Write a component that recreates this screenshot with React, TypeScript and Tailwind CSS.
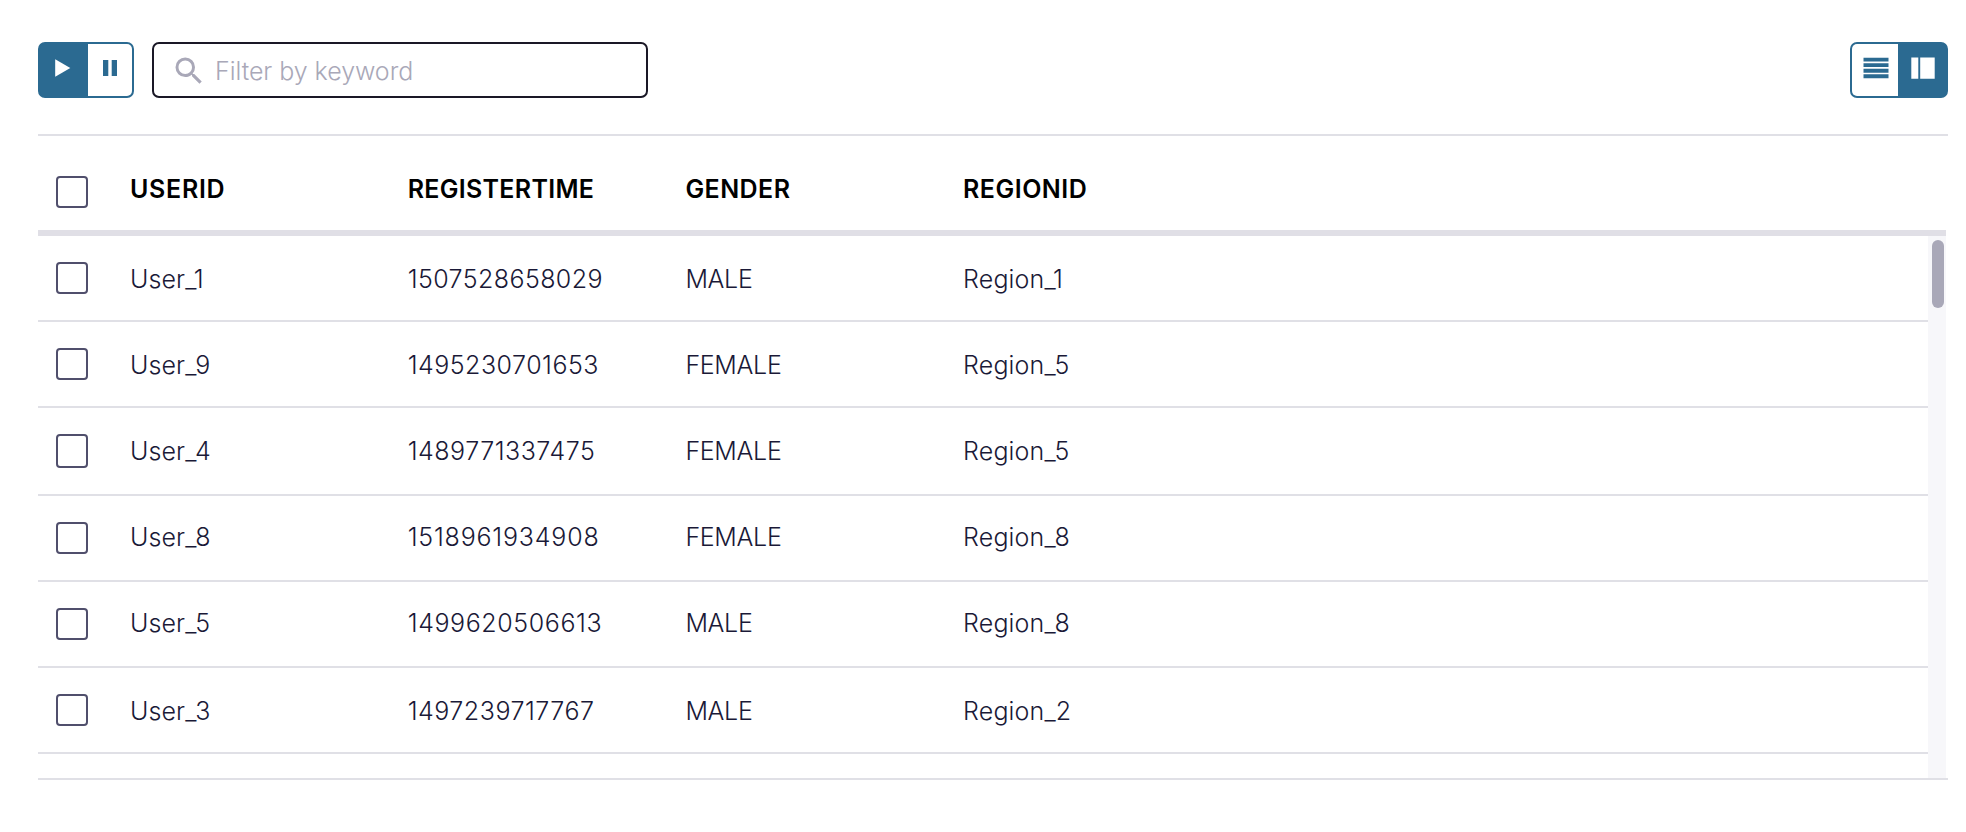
const columns = [
  { name: "USERID", tracking: "tracking-[0.7px]" },
  { name: "REGISTERTIME", tracking: "tracking-[0.3px]" },
  { name: "GENDER", tracking: "tracking-[0.45px]" },
  { name: "REGIONID", tracking: "tracking-[0.5px]" },
];

const rows = [
  { user: "User_1", time: "1507528658029", gender: "MALE", region: "Region_1", height: "h-[86px]", box: "h-8", lift: "pb-[25px]", digits: "tracking-[0.42px]" },
  { user: "User_9", time: "1495230701653", gender: "FEMALE", region: "Region_5", height: "h-[86px]", box: "h-8", lift: "pb-[25px]", digits: "tracking-[0.5px]" },
  { user: "User_4", time: "1489771337475", gender: "FEMALE", region: "Region_5", height: "h-[88px]", box: "h-[34px]", lift: "pb-[27px]", digits: "tracking-[0.52px]" },
  { user: "User_8", time: "1518961934908", gender: "FEMALE", region: "Region_8", height: "h-[86px]", box: "h-8", lift: "pb-[27px]", digits: "tracking-[0.8px]" },
  { user: "User_5", time: "1499620506613", gender: "MALE", region: "Region_8", height: "h-[86px]", box: "h-8", lift: "pb-[27px]", digits: "tracking-[0.6px]" },
  { user: "User_3", time: "1497239717767", gender: "MALE", region: "Region_2", height: "h-[86px]", box: "h-8", lift: "pb-[25px]", digits: "tracking-[0.52px]" },
];

function Checkbox({ size, label }: { size: string; label: string }) {
  return (
    <button
      type="button"
      role="checkbox"
      aria-checked="false"
      aria-label={label}
      className={`${size} block w-8 shrink-0 rounded-[4px] border-2 border-[#504f6c] bg-white`}
    />
  );
}

function Toolbar() {
  return (
    <div className="flex h-14 items-stretch">
      <div className="flex w-24 overflow-hidden rounded-[7px] border-2 border-[#2b6a91] bg-[#2b6a91]">
        <button type="button" aria-label="Play" className="w-12 bg-[#2b6a91]">
          <svg viewBox="0 0 48 52" className="h-[52px] w-12">
            <path d="M15.2 15.2V32.8L30.3 24Z" fill="#fff" />
          </svg>
        </button>
        <button type="button" aria-label="Pause" className="w-11 bg-white">
          <svg viewBox="0 0 44 52" className="h-[52px] w-11">
            <path d="M15 16h5.3v16H15zM23.7 16H29v16h-5.3z" fill="#2b6a91" />
          </svg>
        </button>
      </div>
      <label className="ml-[18px] flex w-[496px] items-center rounded-[7px] border-2 border-[#1a1826] bg-white pt-[2px] pl-[17px]">
        <svg viewBox="0 0 24 24" className="size-9 shrink-0" fill="#a9a8b8">
          <path d="M15.5 14h-.79l-.28-.27A6.471 6.471 0 0 0 16 9.5 6.5 6.5 0 1 0 9.5 16c1.61 0 3.09-.59 4.23-1.57l.27.28v.79l5 4.99L20.49 19l-4.99-5zm-6 0C7.01 14 5 11.99 5 9.5S7.01 5 9.5 5 14 7.01 14 9.5 11.99 14 9.5 14z" />
        </svg>
        <input
          placeholder="Filter by keyword"
          className="ml-2 min-w-0 flex-1 text-[25px] leading-8 font-light tracking-[-0.05px] outline-none placeholder:text-[#a9a8b8] placeholder:opacity-100"
        />
      </label>
      <div className="ml-auto flex w-[98px] overflow-hidden rounded-[7px] border-2 border-[#2b6a91] bg-[#2b6a91]">
        <button type="button" aria-label="List view" className="w-[46px] bg-white">
          <svg viewBox="0 0 46 52" className="h-[52px] w-[46px]">
            <path d="M11.5 13.7h25v3.9h-25zM11.5 19.2h25v3.9h-25zM11.5 24.8h25v3.9h-25zM11.5 30.3h25v4h-25z" fill="#2b6a91" />
          </svg>
        </button>
        <button type="button" aria-label="Table view" className="w-12 bg-[#2b6a91]">
          <svg viewBox="0 0 48 52" className="h-[52px] w-12">
            <path d="M13.3 13.6h7v21.1h-7zM22.2 13.6h14.5v21.1H22.2z" fill="#fff" />
          </svg>
        </button>
      </div>
    </div>
  );
}

export default function App() {
  return (
    <div className="h-[832px] overflow-hidden bg-white pt-[42px] pr-[18px] pl-[38px] font-['Inter',sans-serif] text-[#1a1937]">
      <Toolbar />
      <div className="mt-9 flex h-[646px] flex-col border-y-2 border-[#e0e0e6]">
        <div className="mr-[2px] flex h-[100px] shrink-0 border-b-[6px] border-[#e0dfe6] pl-[18px]">
          <div className="pt-10">
            <Checkbox size="h-8" label="Select all" />
          </div>
          <div className="ml-[42px] flex pt-[37px] text-[25px] leading-8 font-semibold text-black">
            {columns.map((column) => (
              <div key={column.name} className={`w-[277.7px] ${column.tracking}`}>
                {column.name}
              </div>
            ))}
          </div>
        </div>
        <div className="mr-[2px] flex min-h-0 flex-1">
          <div className="flex-1 overflow-hidden">
            {rows.map((row) => (
              <div key={row.user} className={`${row.height} flex items-end border-b-2 border-[#e0e0e6] pl-[18px]`}>
                <div className="pb-[26px]">
                  <Checkbox size={row.box} label={row.user} />
                </div>
                <div className={`${row.lift} ml-[42px] flex text-[25px] leading-8 font-light`}>
                  <div className="w-[277.7px] tracking-[0.1px]">{row.user}</div>
                  <div className={`w-[277.7px] ${row.digits}`}>{row.time}</div>
                  <div className="w-[277.7px] tracking-[-0.3px]">{row.gender}</div>
                  <div className="w-[277.7px] tracking-[0.15px]">{row.region}</div>
                </div>
              </div>
            ))}
          </div>
          <div className="w-[18px] bg-[#f7f7fa] pt-1 pl-1">
            <div className="h-[68px] w-3 rounded-full bg-[#a9a8b8]" />
          </div>
        </div>
      </div>
    </div>
  );
}
